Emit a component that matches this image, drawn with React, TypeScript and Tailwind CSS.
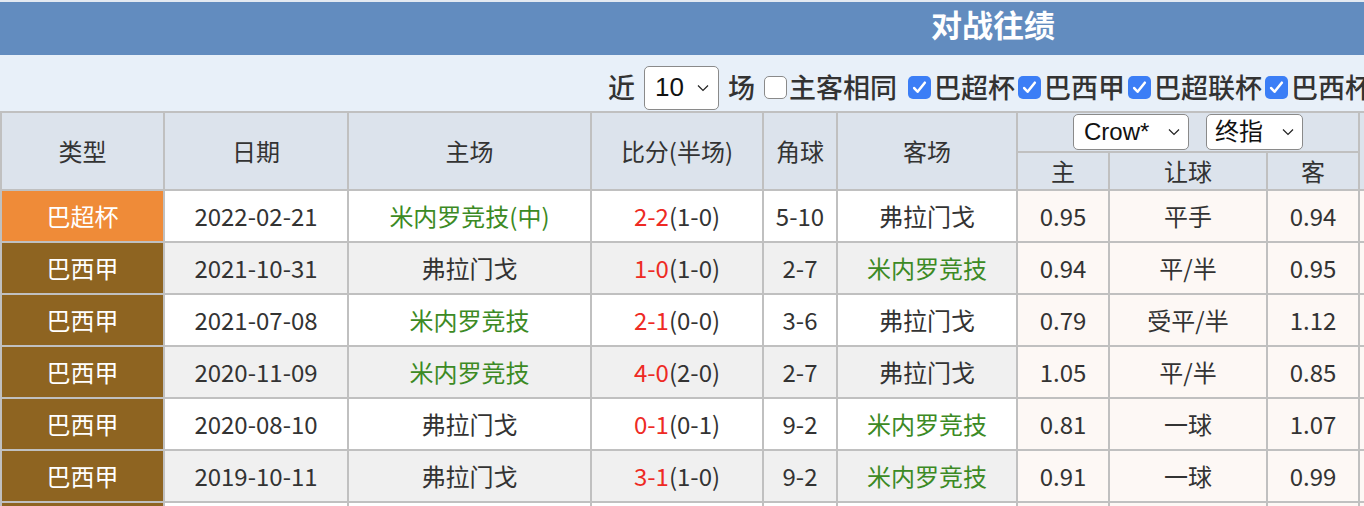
import React from 'react';

// ---------------------------------------------------------------------------
// 对战往绩 — head-to-head record table
// ---------------------------------------------------------------------------

type Row = {
  type: string;
  cup?: boolean;
  date: string;
  home: string;
  homeGreen?: boolean;
  score: string;
  half: string;
  corner: string;
  away: string;
  awayGreen?: boolean;
  h: string;
  line: string;
  a: string;
};

const rows: Row[] = [
  { type: '巴超杯', cup: true, date: '2022-02-21', home: '米内罗竞技(中)', homeGreen: true, score: '2-2', half: '(1-0)', corner: '5-10', away: '弗拉门戈', h: '0.95', line: '平手', a: '0.94' },
  { type: '巴西甲', date: '2021-10-31', home: '弗拉门戈', score: '1-0', half: '(1-0)', corner: '2-7', away: '米内罗竞技', awayGreen: true, h: '0.94', line: '平/半', a: '0.95' },
  { type: '巴西甲', date: '2021-07-08', home: '米内罗竞技', homeGreen: true, score: '2-1', half: '(0-0)', corner: '3-6', away: '弗拉门戈', h: '0.79', line: '受平/半', a: '1.12' },
  { type: '巴西甲', date: '2020-11-09', home: '米内罗竞技', homeGreen: true, score: '4-0', half: '(2-0)', corner: '2-7', away: '弗拉门戈', h: '1.05', line: '平/半', a: '0.85' },
  { type: '巴西甲', date: '2020-08-10', home: '弗拉门戈', score: '0-1', half: '(0-1)', corner: '9-2', away: '米内罗竞技', awayGreen: true, h: '0.81', line: '一球', a: '1.07' },
  { type: '巴西甲', date: '2019-10-11', home: '弗拉门戈', score: '3-1', half: '(1-0)', corner: '9-2', away: '米内罗竞技', awayGreen: true, h: '0.91', line: '一球', a: '0.99' },
];

function Chevron({ className = '' }: { className?: string }) {
  return (
    <svg viewBox="0 0 12 8" className={className} fill="none" stroke="#222" strokeWidth="1.2">
      <path d="M1 1.5l5 5 5-5" />
    </svg>
  );
}

function Check({ checked }: { checked: boolean }) {
  if (!checked) {
    return <span className="inline-block size-[23px] rounded-[5px] border border-[#8a8a8a] bg-white" />;
  }
  return (
    <span className="inline-flex size-[23px] items-center justify-center rounded-[5px] bg-[#3b7ef6]">
      <svg viewBox="0 0 16 16" className="size-[17px]" fill="none" stroke="#fff" strokeWidth="2.4" strokeLinecap="round" strokeLinejoin="round">
        <path d="M3 8.5l3.2 3.5L13 3.5" />
      </svg>
    </span>
  );
}

function Select({ label, className = '' }: { label: string; className?: string }) {
  return (
    <span
      className={`inline-flex items-center justify-between rounded-[5px] border border-[#8a8a8a] bg-white font-normal text-[#111] ${className}`}
    >
      <span className="font-['Liberation_Sans','Noto_Sans_CJK_SC',sans-serif]">{label}</span>
      <Chevron className="h-[8px] w-[12px]" />
    </span>
  );
}

export default function App() {
  const cell = 'flex items-center justify-center';
  return (
    <div className="h-[506px] w-[1364px] overflow-hidden bg-white font-['Noto_Sans_CJK_SC',sans-serif] text-[#333]">
      <div className="w-[1986px]">
        {/* title bar */}
        <div className="flex h-[55px] items-center justify-center border-t-2 border-[#e3e9f1] bg-[#628cbf] pb-[8px]">
          <span className="text-[31px] font-bold text-white">对战往绩</span>
        </div>

        {/* filter bar */}
        <div className="flex h-[56px] items-center justify-center bg-[#e8f0f9] pr-[6px] pt-[9px] text-[27px] font-medium text-[#333]">
          <span>近</span>
          <Select label="10" className="ml-[9px] h-[44px] w-[75px] pl-[10px] pr-[9px] text-[26px]" />
          <span className="ml-[9px]">场</span>
          <span className="ml-[9px] mr-[2px] flex"><Check checked={false} /></span>
          <span>主客相同</span>
          <span className="ml-[11px] mr-[3px] flex"><Check checked /></span>
          <span>巴超杯</span>
          <span className="mx-[3px] flex"><Check checked /></span>
          <span>巴西甲</span>
          <span className="mx-[3px] flex"><Check checked /></span>
          <span>巴超联杯</span>
          <span className="mx-[3px] flex"><Check checked /></span>
          <span>巴西杯</span>
        </div>

        {/* table */}
        <div className="grid grid-cols-[161px_182px_241px_170px_72px_178px_90px_156px_90px_600px] grid-rows-[38px_36px] auto-rows-[50px] gap-[2px] bg-[#c0c0c0] p-[2px] text-[24px]">
          <div className={`${cell} row-span-2 bg-[#dce3ec]`}>类型</div>
          <div className={`${cell} row-span-2 bg-[#dce3ec]`}>日期</div>
          <div className={`${cell} row-span-2 bg-[#dce3ec]`}>主场</div>
          <div className={`${cell} row-span-2 bg-[#dce3ec]`}>比分(半场)</div>
          <div className={`${cell} row-span-2 bg-[#dce3ec]`}>角球</div>
          <div className={`${cell} row-span-2 bg-[#dce3ec]`}>客场</div>
          <div className={`${cell} col-span-3 gap-[17px] bg-[#dce3ec]`}>
            <Select label="Crow*" className="h-[36px] w-[116px] pl-[10px] pr-[8px] text-[24px]" />
            <Select label="终指" className="h-[36px] w-[97px] pl-[8px] pr-[8px] text-[24px]" />
          </div>
          <div className="row-span-2 bg-[#dce3ec]" />
          <div className={`${cell} bg-[#dce3ec]`}>主</div>
          <div className={`${cell} bg-[#dce3ec]`}>让球</div>
          <div className={`${cell} bg-[#dce3ec]`}>客</div>

          {rows.map((r, i) => {
            const bg = i % 2 === 0 ? 'bg-white' : 'bg-[#f0f0f0]';
            return (
              <React.Fragment key={r.date}>
                <div className={`${cell} text-white ${r.cup ? 'bg-[#ef8b38]' : 'bg-[#8e6421]'}`}>{r.type}</div>
                <div className={`${cell} ${bg}`}>{r.date}</div>
                <div className={`${cell} ${bg} ${r.homeGreen ? 'text-[#3c8a24]' : ''}`}>{r.home}</div>
                <div className={`${cell} ${bg}`}>
                  <span className="text-[#ee2a24]">{r.score}</span>
                  <span>{r.half}</span>
                </div>
                <div className={`${cell} ${bg}`}>{r.corner}</div>
                <div className={`${cell} ${bg} ${r.awayGreen ? 'text-[#3c8a24]' : ''}`}>{r.away}</div>
                <div className={`${cell} bg-[#fdf8f5]`}>{r.h}</div>
                <div className={`${cell} bg-[#fdf8f5]`}>{r.line}</div>
                <div className={`${cell} bg-[#fdf8f5]`}>{r.a}</div>
                <div className="bg-[#fdf8f5]" />
              </React.Fragment>
            );
          })}

          {/* next row, only its top edge shows */}
          <div className="bg-[#8e6421]" />
          <div className="bg-white" />
          <div className="bg-white" />
          <div className="bg-white" />
          <div className="bg-white" />
          <div className="bg-white" />
          <div className="bg-[#fdf8f5]" />
          <div className="bg-[#fdf8f5]" />
          <div className="bg-[#fdf8f5]" />
          <div className="bg-[#fdf8f5]" />
        </div>
      </div>
    </div>
  );
}
